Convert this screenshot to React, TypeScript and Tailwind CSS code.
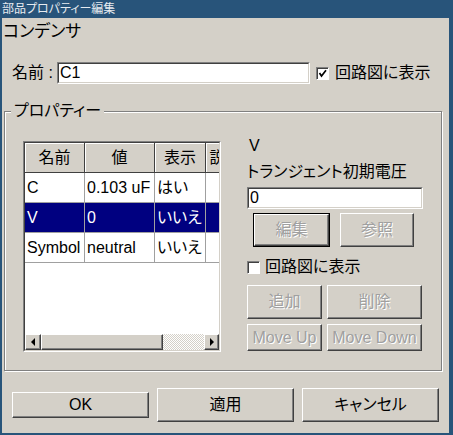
import React from "react";

const FONT = "font-['Liberation_Sans','Noto_Sans_CJK_JP',sans-serif] [font-feature-settings:'palt']";
const raised =
  "border border-t-white border-l-white border-r-[#404040] border-b-[#404040] shadow-[inset_-1px_-1px_0_#808080] bg-[#d4d0c8]";

function Btn({
  children,
  className = "",
  disabled = false,
  isDefault = false,
}: {
  children: React.ReactNode;
  className?: string;
  disabled?: boolean;
  isDefault?: boolean;
}) {
  const inner = (
    <div
      className={`${raised} w-full h-full flex items-center justify-center text-[16px] leading-[18px] ${
        disabled ? "text-[#a0a0a0] [text-shadow:1px_1px_0_#fff]" : "text-black"
      }`}
    >
      {children}
    </div>
  );
  if (isDefault) return <div className={`border border-black ${className}`}>{inner}</div>;
  return <div className={className}>{inner}</div>;
}

function Check({ checked }: { checked: boolean }) {
  return (
    <div className="w-[13px] h-[13px] shrink-0 bg-white border border-t-[#808080] border-l-[#808080] border-r-white border-b-white shadow-[inset_1px_1px_0_#404040] flex items-center justify-center">
      {checked && (
        <svg width="9" height="9" viewBox="0 0 9 9">
          <polyline points="1.5,4 3.5,7 8,1.2" stroke="black" strokeWidth="1.7" fill="none" />
        </svg>
      )}
    </div>
  );
}

function Sunken({ className = "", children }: { className?: string; children?: React.ReactNode }) {
  return (
    <div
      className={`border border-t-[#808080] border-l-[#808080] border-r-white border-b-white ${className}`}
    >
      <div className="w-full h-full border border-t-[#404040] border-l-[#404040] border-r-[#d4d0c8] border-b-[#d4d0c8] bg-white">
        {children}
      </div>
    </div>
  );
}

const widths = ["w-[60px]", "w-[70px]", "w-[51px]", "w-[40px]"];

function Table() {
  const header = ["名前", "値", "表示", "説明"];
  const rows = [
    ["C", "0.103 uF", "はい", ""],
    ["V", "0", "いいえ", ""],
    ["Symbol", "neutral", "いいえ", ""],
  ];
  return (
    <div className="mt-[4px] w-[198px] h-[211px] shrink-0 border border-t-[#808080] border-l-[#808080] border-r-white border-b-white">
      <div className="w-full h-full border border-t-[#404040] border-l-[#404040] border-r-[#d4d0c8] border-b-[#d4d0c8] bg-white flex flex-col">
        <div className="flex-1 overflow-hidden">
          <div className="flex h-[30px] w-[221px]">
            {header.map((h, i) => (
              <div
                key={i}
                className={`${widths[i]} shrink-0 h-full bg-[#d4d0c8] border-r border-b border-[#404040] shadow-[inset_1px_1px_0_#fff] flex items-center justify-center overflow-hidden whitespace-nowrap text-[16px]`}
              >
                {h}
              </div>
            ))}
          </div>
          {rows.map((r, ri) => {
            const sel = ri === 1;
            return (
              <div key={ri} className={`flex h-[30px] w-[221px] ${sel ? "bg-[#000080] text-white" : "bg-white text-black"}`}>
                {r.map((c, ci) => (
                  <div
                    key={ci}
                    className={`${widths[ci]} shrink-0 h-full border-r border-b border-[#a0a0a0] flex items-center pl-[2px] overflow-hidden whitespace-nowrap text-[16px]`}
                  >
                    {c}
                  </div>
                ))}
              </div>
            );
          })}
        </div>
        <div className="h-[16px] flex shrink-0">
          <div className={`${raised} w-[16px] h-full flex items-center justify-center`}>
            <svg width="5" height="8" viewBox="0 0 5 8">
              <polygon points="4,0 4,8 0,4" fill="black" />
            </svg>
          </div>
          <div className={`${raised} w-[122px] h-full`} />
          <div className="flex-1 h-full bg-[repeating-conic-gradient(#d4d0c8_0%_25%,#ffffff_0%_50%)] bg-[length:2px_2px]" />
          <div className={`${raised} w-[15px] h-full flex items-center justify-center`}>
            <svg width="5" height="8" viewBox="0 0 5 8">
              <polygon points="1,0 1,8 5,4" fill="black" />
            </svg>
          </div>
        </div>
      </div>
    </div>
  );
}

export default function App() {
  return (
    <div className={`w-[453px] h-[435px] bg-[#28547a] flex flex-col ${FONT}`}>
      <div className="h-[18px] pl-[2px] text-[12px] leading-[18px] text-[#e6ebf0] whitespace-nowrap">
        部品プロパティー編集
      </div>
      <div className="ml-[2px] mr-[4px] mb-[2px] flex-1 bg-[#d4d0c8] text-black flex flex-col">
        <div className="mt-[4px] h-[20px] text-[17px] leading-[20px] pl-[1px]">コンデンサ</div>

        <div className="mt-[20px] h-[22px] flex items-center">
          <div className="ml-[10px] w-[45px] text-[16px] leading-[18px] whitespace-nowrap">名前 :</div>
          <Sunken className="w-[253px] h-[22px]">
            <div className="pl-[1px] text-[16px] leading-[18px]">C1</div>
          </Sunken>
          <div className="ml-[6px]">
            <Check checked />
          </div>
          <div className="ml-[6px] text-[16px] leading-[18px] whitespace-nowrap">回路図に表示</div>
        </div>

        <div className="relative mt-[27px] ml-[2px] w-[438px] h-[260px] shrink-0 border border-[#808080] shadow-[inset_1px_1px_0_#fff,1px_1px_0_#fff]">
          <div className="absolute left-[6px] top-[-10px] px-[3px] bg-[#d4d0c8] text-[16px] leading-[18px] whitespace-nowrap">
            プロパティー
          </div>
          <div className="flex pt-[25px] pl-[18px]">
            <Table />
            <div className="ml-[26px] w-[176px] flex flex-col">
              <div className="h-[18px] text-[16px] leading-[18px] pl-[2px]">V</div>
              <div className="mt-[8px] h-[18px] text-[16px] leading-[18px] whitespace-nowrap">トランジェント初期電圧</div>
              <Sunken className="mt-[6px] w-[176px] h-[22px]">
                <div className="pl-[1px] text-[16px] leading-[18px]">0</div>
              </Sunken>
              <div className="mt-[4px] h-[34px] flex">
                <Btn isDefault disabled className="ml-[6px] w-[77px] h-full">
                  編集
                </Btn>
                <Btn disabled className="ml-[10px] w-[74px] h-full">
                  参照
                </Btn>
              </div>
              <div className="mt-[11px] h-[18px] flex items-center">
                <Check checked={false} />
                <div className="ml-[5px] text-[16px] leading-[18px] whitespace-nowrap">回路図に表示</div>
              </div>
              <div className="mt-[9px] h-[34px] flex">
                <Btn disabled className="w-[75px] h-full">
                  追加
                </Btn>
                <Btn disabled className="ml-[5px] w-[95px] h-full">
                  削除
                </Btn>
              </div>
              <div className="mt-[5px] h-[27px] flex">
                <Btn disabled className="w-[75px] h-full">
                  Move Up
                </Btn>
                <Btn disabled className="ml-[5px] w-[95px] h-full">
                  Move Down
                </Btn>
              </div>
            </div>
          </div>
        </div>

        <div className="mt-[17px] h-[34px] flex items-center pl-[10px] gap-[8px]">
          <Btn className="w-[137px] h-[26px]">OK</Btn>
          <Btn className="w-[137px] h-[34px]">適用</Btn>
          <Btn className="w-[137px] h-[34px]">キャンセル</Btn>
        </div>
      </div>
    </div>
  );
}
